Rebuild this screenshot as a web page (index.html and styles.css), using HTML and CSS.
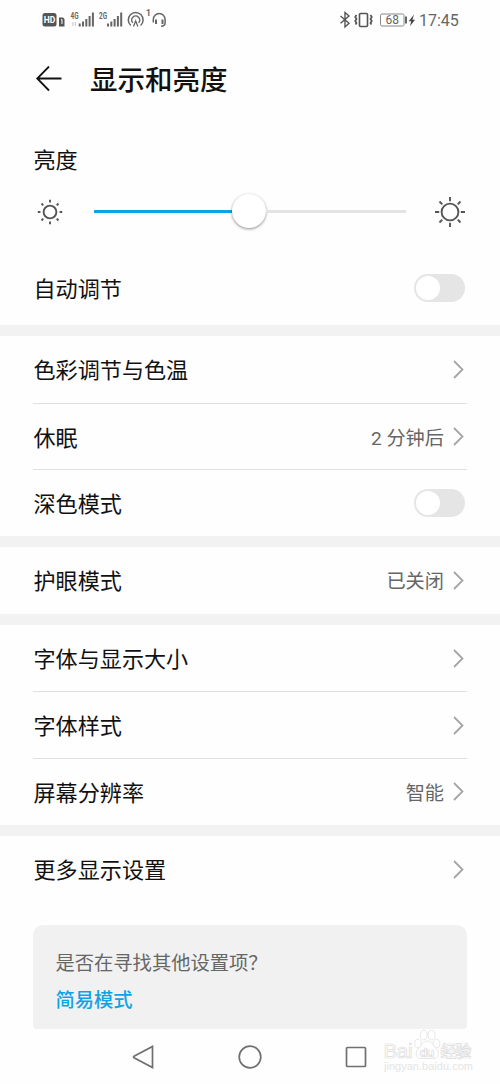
FILE: index.html
```html
<!DOCTYPE html>
<html lang="zh-CN">
<head>
  <meta charset="UTF-8">
  <title>显示和亮度</title>
  <link rel="stylesheet" href="styles.css">
</head>
<body>
  <!-- 状态栏 -->
  <div class="status-bar">
    <svg class="status-left" width="140" height="24" viewBox="0 0 140 24">
      <rect x="1.500" y="5" width="14" height="13.500" rx="2.500" fill="#555"/>
      <text x="8.500" y="15.200" class="hd-text">HD</text>
      <path d="M18 9.500h4l1.500 1.500v7.500H18z" fill="#555"/>
      <path d="M20 12l1-.5v4.500" stroke="#fff" fill="none"/>
      <text x="29.500" y="10.500" class="net-text" textLength="8" lengthAdjust="spacingAndGlyphs">4G</text>
      <path d="M32 18v-4M34.500 18v-4" stroke="#ccc" stroke-width="1.200"/>
      <path d="M38.700 18.500v-3M42 18.500v-5M45.300 18.500V11M48.600 18.500V8M51.900 18.500V4.500" class="bars"/>
      <text x="58" y="10.500" class="net-text" textLength="8" lengthAdjust="spacingAndGlyphs">2G</text>
      <path d="M67 18.500v-3M70.300 18.500v-5M73.600 18.500V11M76.900 18.500V8M80.200 18.500V4.500" class="bars"/>
      <g fill="none" stroke="#666" stroke-width="1.500">
        <path d="M89.800 17.500a7.400 7.400 0 1 1 9.800 0"/>
        <path d="M91.800 14.800a4 4 0 1 1 5.800 0"/>
        <path d="M92.500 18.500l2.200-5.500 2.200 5.500" stroke-width="1.300"/>
      </g>
      <text x="105" y="8" class="net-text">1</text>
      <g fill="none" stroke="#666" stroke-width="1.500">
        <path d="M112.300 14.500v-3a5.900 5.900 0 0 1 11.800 0v3.500q0 3-4 3.300"/>
        <path d="M115 11.500v4.500M121.500 11.500v4.500" stroke-width="2"/>
      </g>
    </svg>
    <div class="status-right">
      <svg width="76" height="24" viewBox="0 0 76 24">
        <path d="M1.500 8l8.500 7.300-4 3.700V4.500l4 3.500-8.500 7.300" fill="none" stroke="#555" stroke-width="1.400"/>
        <rect x="20.500" y="5.500" width="8" height="13" rx="1" fill="none" stroke="#555" stroke-width="1.600"/>
        <path d="M17.500 7l-1.300 2 1.300 2-1.300 2 1.300 2-1 1.500M31.500 7l1.300 2-1.300 2 1.300 2-1.300 2 1 1.500" fill="none" stroke="#555" stroke-width="1.700"/>
        <rect x="41.500" y="6" width="23.500" height="12" rx="1.500" fill="none" stroke="#888"/>
        <path d="M67 8.500v7" stroke="#555" stroke-width="1.800"/>
        <text x="53.200" y="16.200" class="battery-text">68</text>
        <path d="M75 6.500l-5.300 6.700h2.500l-1.200 5 5-6.400h-2.600z" fill="#444"/>
      </svg>
      <span>17:45</span>
    </div>
  </div>

  <header class="header">
    <svg width="26" height="26" viewBox="0 0 26 26" fill="none" stroke="#111" stroke-width="1.800">
      <path d="M25.500 12.500H1.500M13 .5L1.200 12.500 13 24.500"/>
    </svg>
    <h1>显示和亮度</h1>
  </header>

  <!-- 亮度 -->
  <section class="brightness">
    <div class="label">亮度</div>
    <div class="slider-row">
      <svg class="sun" width="26" height="26" viewBox="0 0 26 26">
        <circle cx="13" cy="13" r="6.400"/>
        <path d="M13 .8v2.600M13 22.600v2.600M.8 13h2.600M22.600 13h2.600M4.500 4.500l1.800 1.800M19.700 19.700l1.800 1.800M4.500 21.500l1.800-1.800M19.700 6.300l1.800-1.800"/>
      </svg>
      <div class="slider">
        <div class="slider-fill"></div>
        <div class="slider-knob"></div>
        <div class="slider-rest"></div>
      </div>
      <svg class="sun" width="32" height="32" viewBox="0 0 32 32">
        <circle cx="16" cy="16" r="8.400"/>
        <path d="M16 1v4.200M16 26.800V31M1 16h4.200M26.800 16H31M5.500 5.500l2.800 2.800M23.700 23.700l2.800 2.800M5.500 26.500l2.800-2.800M23.700 8.300l2.800-2.800"/>
      </svg>
    </div>
    <div class="auto-row">
      <span class="label">自动调节</span>
      <div class="switch"></div>
    </div>
  </section>

  <section class="group">
    <div class="row">
      <span class="label">色彩调节与色温</span>
      <svg class="chevron" viewBox="0 0 11 19"><path d="M1 1l8.500 8.500L1 18"/></svg>
    </div>
    <div class="row">
      <span class="label">休眠</span>
      <span class="value">2 分钟后</span>
      <svg class="chevron" viewBox="0 0 11 19"><path d="M1 1l8.500 8.500L1 18"/></svg>
    </div>
    <div class="row">
      <span class="label">深色模式</span>
      <div class="switch"></div>
    </div>
  </section>

  <section class="group">
    <div class="row">
      <span class="label">护眼模式</span>
      <span class="value">已关闭</span>
      <svg class="chevron" viewBox="0 0 11 19"><path d="M1 1l8.500 8.500L1 18"/></svg>
    </div>
  </section>

  <section class="group">
    <div class="row">
      <span class="label">字体与显示大小</span>
      <svg class="chevron" viewBox="0 0 11 19"><path d="M1 1l8.500 8.500L1 18"/></svg>
    </div>
    <div class="row">
      <span class="label">字体样式</span>
      <svg class="chevron" viewBox="0 0 11 19"><path d="M1 1l8.500 8.500L1 18"/></svg>
    </div>
    <div class="row">
      <span class="label">屏幕分辨率</span>
      <span class="value">智能</span>
      <svg class="chevron" viewBox="0 0 11 19"><path d="M1 1l8.500 8.500L1 18"/></svg>
    </div>
  </section>

  <section class="group">
    <div class="row">
      <span class="label">更多显示设置</span>
      <svg class="chevron" viewBox="0 0 11 19"><path d="M1 1l8.500 8.500L1 18"/></svg>
    </div>
  </section>

  <div class="card">
    <p>是否在寻找其他设置项？</p>
    <a href="#">简易模式</a>
  </div>

  <!-- 导航栏 -->
  <nav class="nav-bar">
    <svg viewBox="0 0 24 24"><path d="M20.500 1.500v21L2 12.700q-1-.7 0-1.400z"/></svg>
    <svg viewBox="0 0 24 24"><circle cx="12" cy="12" r="10.800"/></svg>
    <svg viewBox="0 0 24 24"><rect x="2.500" y="2.500" width="19" height="19" rx="1"/></svg>
  </nav>

  <!-- 水印 -->
  <svg class="watermark" width="96" height="50" viewBox="0 0 96 50">
    <text x="1.500" y="32" class="wm-name" textLength="29">Bai</text>
    <g class="paw">
      <ellipse cx="36" cy="17.500" rx="3.300" ry="4.300"/>
      <ellipse cx="41.700" cy="9" rx="3.500" ry="4.800"/>
      <ellipse cx="49.500" cy="9" rx="3.500" ry="4.800"/>
      <ellipse cx="54.500" cy="17.500" rx="3.300" ry="4.300"/>
      <path d="M45.500 15c4 0 5 4 9 8 3.500 3.500 2 9.500-3 9.500H39c-5 0-6.500-6-3-9.500 4-4 5-8 9.500-8z"/>
    </g>
    <text x="37.500" y="30.500" class="wm-du" textLength="15">du</text>
    <text x="58.500" y="31" class="wm-cn" textLength="31">经验</text>
    <text x="2" y="44" class="wm-url" textLength="89">jingyan.baidu.com</text>
  </svg>
</body>
</html>
```

FILE: styles.css
```css
* {
  box-sizing: border-box;
}
body {
  font-family: Roboto, "Noto Sans CJK SC", sans-serif;
  margin: 0;
  height: 1084px;
  background-color: #fefefe;
  color: #111;
  position: relative;
  overflow: hidden;
}
svg {
  display: block;
  flex: none;
}
.status-bar {
  display: flex;
  justify-content: space-between;
  height: 40px;
  padding: 8px 42px 0 41px;
}
.status-right {
  display: flex;
  gap: 4px;
  font-size: 16px;
  line-height: 25px;
  color: #666;
}
.status-right span {
  width: 39px;
}
.hd-text {
  font-size: 8.5px;
  font-weight: bold;
  fill: #fff;
  text-anchor: middle;
}
.net-text {
  font-size: 8.5px;
  font-weight: bold;
  fill: #666;
}
.battery-text {
  font-size: 12px;
  fill: #666;
  text-anchor: middle;
}
.bars {
  stroke: #666;
  stroke-width: 2;
}
.header {
  display: flex;
  align-items: center;
  gap: 28px;
  height: 78px;
  padding-left: 36px;
}
.header h1 {
  margin: 4px 0 0;
  font-size: 27.5px;
  font-weight: 500;
  line-height: 40px;
}
.label {
  padding: 2px 0 0 0.5px;
  font-size: 22.1px;
  line-height: 32px;
}
.brightness {
  height: 207px;
  padding: 24px 33px 0;
}
.slider-row {
  display: flex;
  align-items: center;
  height: 36px;
  margin: 17px 0 0 4px;
}
.slider {
  display: flex;
  align-items: center;
  width: 312px;
  margin: 0 28px 0 31px;
}
.slider-fill {
  width: 138px;
  height: 3px;
  background-color: #0ba5e3;
}
.slider-knob {
  width: 34px;
  height: 34px;
  border-radius: 50%;
  background-color: #fff;
  box-shadow: 0 1px 3px rgba(0, 0, 0, 0.45);
}
.slider-rest {
  flex: 1;
  height: 3px;
  background-color: #e3e3e3;
}
.sun {
  margin-top: 1px;
  fill: none;
  stroke: #555;
  stroke-width: 1.9;
}
.auto-row {
  display: flex;
  align-items: center;
  justify-content: space-between;
  height: 66px;
  margin-top: 26px;
  padding-right: 2px;
}
.switch {
  width: 51px;
  height: 28px;
  padding: 2px;
  border-radius: 14px;
  background-color: #e5e5e5;
}
.switch::before {
  content: "";
  display: block;
  width: 24px;
  height: 24px;
  border-radius: 50%;
  background-color: #fff;
}
.group {
  padding: 0 33px;
  border-top: 11px solid #f2f2f2;
}
.row {
  display: flex;
  align-items: center;
  height: 66.7px;
  padding-right: 2px;
}
.row + .row {
  border-top: 1px solid #e0e0e0;
}
.row .label {
  flex: 1;
}
.value {
  margin-right: 9px;
  font-size: 19.2px;
  color: #666;
}
.chevron {
  width: 11px;
  height: 19px;
  margin-right: 1px;
  fill: none;
  stroke: #a5a5a5;
  stroke-width: 1.8;
}
.card {
  height: 104px;
  margin: 22px 33px 0;
  padding: 25px 22px 0 22.5px;
  border-radius: 10px 10px 4px 4px;
  background-color: #f1f1f1;
  font-size: 19.3px;
  line-height: 28px;
}
.card p {
  margin: 0 0 9px;
  color: #666;
}
.card a {
  display: block;
  color: #0ba5e3;
  font-weight: 500;
  text-decoration: none;
}
.nav-bar {
  display: flex;
  justify-content: center;
  gap: 82px;
  padding-top: 16px;
}
.nav-bar svg {
  width: 24px;
  height: 24px;
  fill: none;
  stroke: #707070;
  stroke-width: 1.7;
}
/* 水印 */
.watermark {
  position: absolute;
  left: 382px;
  top: 1026px;
  fill: #fff;
  stroke: #dcdcdc;
  stroke-width: 0.7;
}
.wm-name,
.wm-du {
  font-family: "Liberation Sans", sans-serif;
}
.wm-name {
  font-size: 20.5px;
}
.wm-du {
  font-size: 13px;
  font-weight: bold;
}
.wm-cn {
  font-size: 16px;
  font-weight: 500;
}
.wm-url {
  font-family: "Liberation Sans", sans-serif;
  font-size: 11px;
  fill: #e5e5e5;
  stroke: none;
}
```
